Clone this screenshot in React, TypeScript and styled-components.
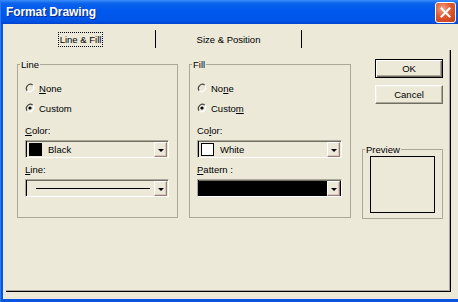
import styled, { createGlobalStyle } from "styled-components";

const GlobalStyle = createGlobalStyle`
  html, body {
    margin: 0;
    padding: 0;
    background: #ece9d8;
  }
  body {
    font-family: Tahoma, "Liberation Sans", Arial, sans-serif;
    font-size: 9.5px;
    color: #000;
  }
`;

const Window = styled.div`
  width: 458px;
  height: 302px;
  box-sizing: border-box;
  display: flex;
  flex-direction: column;
  background: #0a55de;
  border-left: 1px solid #2a7af7;
  overflow: hidden;
`;

const TitleBar = styled.div`
  height: 24px;
  flex: none;
  display: flex;
  align-items: center;
  justify-content: space-between;
  padding: 0 2px 0 6px;
  margin-left: -1px;
  background: linear-gradient(
    180deg,
    #3b8df9 0%,
    #0c63ec 14%,
    #0058ee 40%,
    #0055e8 85%,
    #0043cf 100%
  );
`;

const Title = styled.span`
  font-family: "Liberation Sans", Arial, sans-serif;
  font-weight: bold;
  font-size: 12px;
  color: #fff;
  text-shadow: 1px 1px 0 #0a2a8c;
  letter-spacing: -0.1px;
`;

const CloseButton = styled.button`
  width: 21px;
  height: 21px;
  padding: 0;
  display: flex;
  align-items: center;
  justify-content: center;
  border: 1px solid #fff;
  border-radius: 3px;
  background: radial-gradient(circle at 35% 30%, #f0a58c 0%, #e0582f 45%, #c13b16 100%);
`;

const Client = styled.div`
  flex: 1;
  margin: 0 0 3px 2px;
  background: #ece9d8;
  display: flex;
  flex-direction: column;
`;

const TabStrip = styled.div`
  height: 26px;
  flex: none;
  box-sizing: border-box;
  display: flex;
  align-items: flex-end;
  padding: 0 0 2px 3px;
`;

const Tab = styled.div<{ $width: number }>`
  width: ${(p) => p.$width}px;
  height: 18px;
  box-sizing: border-box;
  display: flex;
  align-items: center;
  justify-content: center;
  border-right: 1px solid #000;
`;

const FocusLabel = styled.span`
  padding: 1px 1px;
  line-height: 11px;
  border: 1px dotted #000;
`;

const Page = styled.div`
  width: 445px;
  height: 242px;
  margin-left: 3px;
  box-sizing: border-box;
  border-right: 1px solid #000;
  border-bottom: 1px solid #000;
  box-shadow: inset -1px -1px 0 #aca899;
  display: grid;
  grid-template-columns: 161px 162px 1fr;
  column-gap: 11px;
  align-items: start;
  padding: 9px 7px 0 11px;
`;

const Group = styled.fieldset`
  margin: 0;
  padding: 0 0 0 2px;
  min-inline-size: 0;
  border: 1px solid #aca899;
  border-radius: 0;
`;

const Legend = styled.legend`
  padding: 0 1px;
  line-height: 11px;
`;

const GroupBody = styled.div`
  display: flex;
  flex-direction: column;
  padding: 11px 0 20px 5px;
`;

const RadioRow = styled.label<{ $gap?: number }>`
  height: 14px;
  display: flex;
  align-items: center;
  gap: 4px;
  margin-top: ${(p) => p.$gap ?? 0}px;
`;

const FieldLabel = styled.div<{ $gap: number }>`
  line-height: 11px;
  margin-top: ${(p) => p.$gap}px;
`;

const Combo = styled.div<{ $fill?: string; $width: number }>`
  width: ${(p) => p.$width}px;
  height: 18px;
  margin-top: 4px;
  box-sizing: border-box;
  display: flex;
  align-items: center;
  padding: 1px 1px 0 3px;
  border-top: 1px solid #aca899;
  border-left: 1px solid #aca899;
  border-right: 1px solid #fff;
  border-bottom: 1px solid #fff;
  box-shadow: inset 1px 0 0 #000, inset 0 1px 0 #716f64;
  background: ${(p) => p.$fill ?? "transparent"};
`;

const Swatch = styled.span<{ $color: string }>`
  width: 13px;
  height: 13px;
  box-sizing: border-box;
  flex: none;
  margin-right: 6px;
  background: ${(p) => p.$color};
  border: 1px solid #000;
`;

const LineSample = styled.span`
  flex: 1;
  height: 1px;
  margin: 0 4px 0 7px;
  background: #000;
`;

const ComboText = styled.span`
  flex: 1;
  line-height: 11px;
`;

const DropButton = styled.span`
  width: 13px;
  height: 15px;
  flex: none;
  margin-left: auto;
  box-sizing: border-box;
  display: flex;
  align-items: center;
  justify-content: center;
  background: #ece9d8;
  border-top: 1px solid #fff;
  border-left: 1px solid #fff;
  border-right: 1px solid #9c8073;
  border-bottom: 1px solid #9c8073;
  box-shadow: inset -1px -1px 0 #d6c8bf;

  &::after {
    content: "";
    border-left: 3px solid transparent;
    border-right: 3px solid transparent;
    border-top: 3px solid #000;
    margin-top: 1px;
  }
`;

const SideColumn = styled.div`
  display: flex;
  flex-direction: column;
  align-items: flex-end;
`;

const PushButton = styled.button<{ $default?: boolean; $gap?: number }>`
  width: 68px;
  height: 19px;
  margin-top: ${(p) => p.$gap ?? 0}px;
  padding: 0;
  font: inherit;
  color: #000;
  background: #ece9d8;
  border: 1px solid;
  border-color: ${(p) => (p.$default ? "#000" : "#fff #716f64 #716f64 #fff")};
  box-shadow: ${(p) =>
    p.$default
      ? "inset 1px 1px 0 #fff, inset -1px -1px 0 #716f64, inset -2px -2px 0 #aca899"
      : "inset -1px -1px 0 #aca899, inset 1px 1px 0 #f1efe2"};
`;

const PreviewGroup = styled(Group)`
  width: 81px;
  box-sizing: border-box;
  margin-top: 40px;
`;

const PreviewBox = styled.div`
  width: 65px;
  height: 57px;
  box-sizing: border-box;
  border: 1px solid #000;
  margin: 1px 0 5px 5px;
`;

const U = styled.span`
  text-decoration: underline;
  text-underline-offset: 1px;
`;

const Radio = ({ checked }: { checked?: boolean }) => (
  <svg width="10" height="10" viewBox="0 0 10 10">
    <path d="M2.2 7.8 A4 4 0 0 1 7.8 2.2" fill="none" stroke="#4a4740" strokeWidth="1.2" />
    <path d="M7.8 2.2 A4 4 0 0 1 2.2 7.8" fill="none" stroke="#fff" strokeWidth="1.2" />
    {checked && <circle cx="5" cy="5" r="1.6" fill="#000" />}
  </svg>
);

const CloseIcon = () => (
  <svg width="11" height="11" viewBox="0 0 11 11">
    <path d="M1.5 1.5 L9.5 9.5 M9.5 1.5 L1.5 9.5" stroke="#fff" strokeWidth="2" strokeLinecap="square" />
  </svg>
);

export default function App() {
  return (
    <>
      <GlobalStyle />
      <Window>
        <TitleBar>
          <Title>Format Drawing</Title>
          <CloseButton aria-label="Close">
            <CloseIcon />
          </CloseButton>
        </TitleBar>
        <Client>
          <TabStrip>
            <Tab $width={150}>
              <FocusLabel>Line &amp; Fill</FocusLabel>
            </Tab>
            <Tab $width={146}>Size &amp; Position</Tab>
          </TabStrip>
          <Page>
            <Group>
              <Legend>Line</Legend>
              <GroupBody>
                <RadioRow>
                  <Radio />
                  <span>
                    <U>N</U>one
                  </span>
                </RadioRow>
                <RadioRow $gap={6}>
                  <Radio checked />
                  <span>Custom</span>
                </RadioRow>
                <FieldLabel $gap={10}>
                  <U>C</U>olor:
                </FieldLabel>
                <Combo $width={144}>
                  <Swatch $color="#000" />
                  <ComboText>Black</ComboText>
                  <DropButton />
                </Combo>
                <FieldLabel $gap={6}>
                  <U>L</U>ine:
                </FieldLabel>
                <Combo $width={144}>
                  <LineSample />
                  <DropButton />
                </Combo>
              </GroupBody>
            </Group>
            <Group>
              <Legend>Fill</Legend>
              <GroupBody>
                <RadioRow>
                  <Radio />
                  <span>
                    No<U>n</U>e
                  </span>
                </RadioRow>
                <RadioRow $gap={6}>
                  <Radio checked />
                  <span>
                    Custo<U>m</U>
                  </span>
                </RadioRow>
                <FieldLabel $gap={10}>
                  Co<U>l</U>or:
                </FieldLabel>
                <Combo $width={145}>
                  <Swatch $color="#fff" />
                  <ComboText>White</ComboText>
                  <DropButton />
                </Combo>
                <FieldLabel $gap={6}>
                  <U>P</U>attern :
                </FieldLabel>
                <Combo $width={145} $fill="#000">
                  <DropButton />
                </Combo>
              </GroupBody>
            </Group>
            <SideColumn>
              <PushButton $default>OK</PushButton>
              <PushButton $gap={7}>Cancel</PushButton>
              <PreviewGroup>
                <Legend>Preview</Legend>
                <PreviewBox />
              </PreviewGroup>
            </SideColumn>
          </Page>
        </Client>
      </Window>
    </>
  );
}
